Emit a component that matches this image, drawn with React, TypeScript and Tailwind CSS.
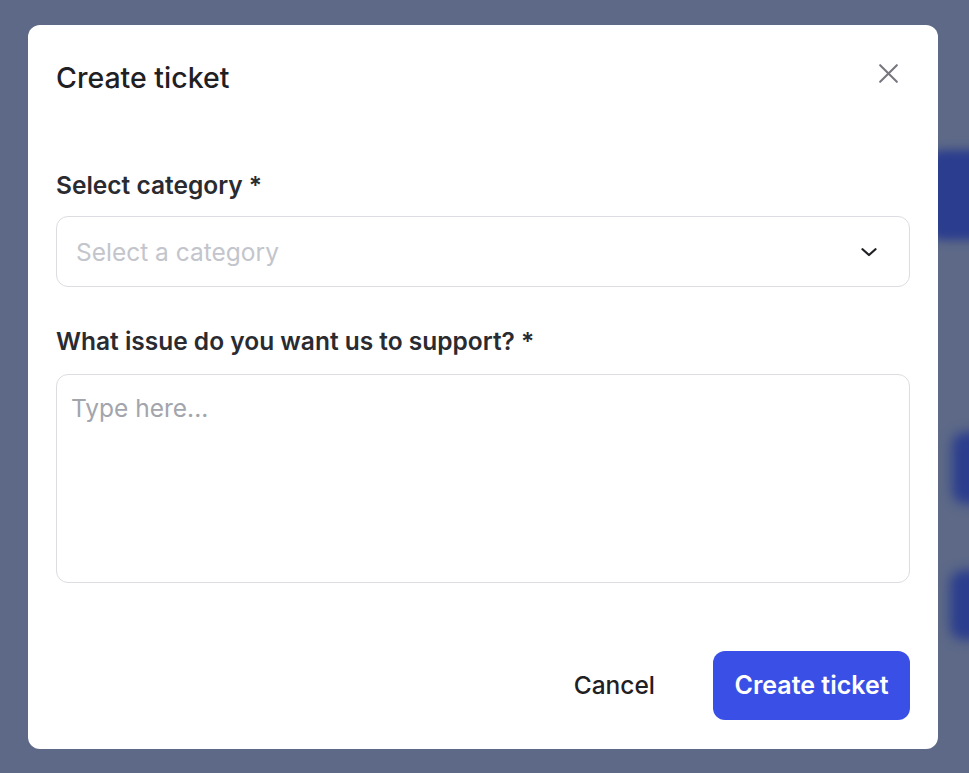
import React from "react";

export default function App() {
  return (
    <div className="relative w-[969px] h-[773px] overflow-hidden bg-[#5d6987]" style={{ fontFamily: "Inter, 'Noto Sans', sans-serif" }}>
      <div className="absolute left-[930px] top-[150px] w-[80px] h-[90px] rounded-[12px] bg-[#2b3d8e] blur-[5px]" />
      <div className="absolute left-[952px] top-[432px] w-[60px] h-[72px] rounded-[14px] bg-[#2b3d8e] blur-[6px]" />
      <div className="absolute left-[950px] top-[570px] w-[60px] h-[70px] rounded-[14px] bg-[#2b3d8e] blur-[6px]" />
      <div className="relative pl-[28px] pt-[25px]">
        <div className="w-[910px] h-[724px] bg-white rounded-[12px] px-[28px] pt-[37px] flex flex-col">
          <div className="flex items-center justify-between h-[32px]">
            <h2 className="text-[28.5px] leading-[32px] font-medium text-[#1f2024]">Create ticket</h2>
            <svg width="25" height="25" viewBox="0 0 24 24" className="mr-[9px] -mt-[10px]" fill="none" stroke="#76787e" strokeWidth="2" strokeLinecap="round">
              <path d="M4 4L20 20M20 4L4 20" />
            </svg>
          </div>
          <label className="mt-[76px] text-[24.5px] leading-[30px] font-semibold text-[#2a2b31]">Select category *</label>
          <div className="mt-[16px] h-[71px] rounded-[12px] border border-[#dcdde2] flex items-center justify-between pl-[19px] pr-[30px]">
            <span className="text-[24.5px] text-[#c3c5cc] translate-y-[1px]">Select a category</span>
            <svg width="20" height="20" viewBox="0 0 16 16" fill="none" stroke="#1f2024" strokeWidth="1.8" strokeLinecap="round" strokeLinejoin="round">
              <path d="M2.8 5.8l5.2 4.6 5.2-4.6" />
            </svg>
          </div>
          <label className="mt-[39px] text-[24.5px] leading-[30px] font-semibold text-[#2a2b31]">What issue do you want us to support? *</label>
          <div className="mt-[18px] h-[209px] rounded-[12px] border border-[#dcdde2] px-[14px] pt-[18px]">
            <span className="text-[24.5px] leading-[30px] text-[#a3a5ad]">Type here...</span>
          </div>
          <div className="mt-[68px] flex items-center justify-end gap-[58px]">
            <button className="text-[24.5px] font-medium text-[#1f2024]">Cancel</button>
            <button className="h-[69px] w-[197px] rounded-[12px] bg-[#3a4fe6] text-white text-[25px] font-semibold">Create ticket</button>
          </div>
        </div>
      </div>
    </div>
  );
}
